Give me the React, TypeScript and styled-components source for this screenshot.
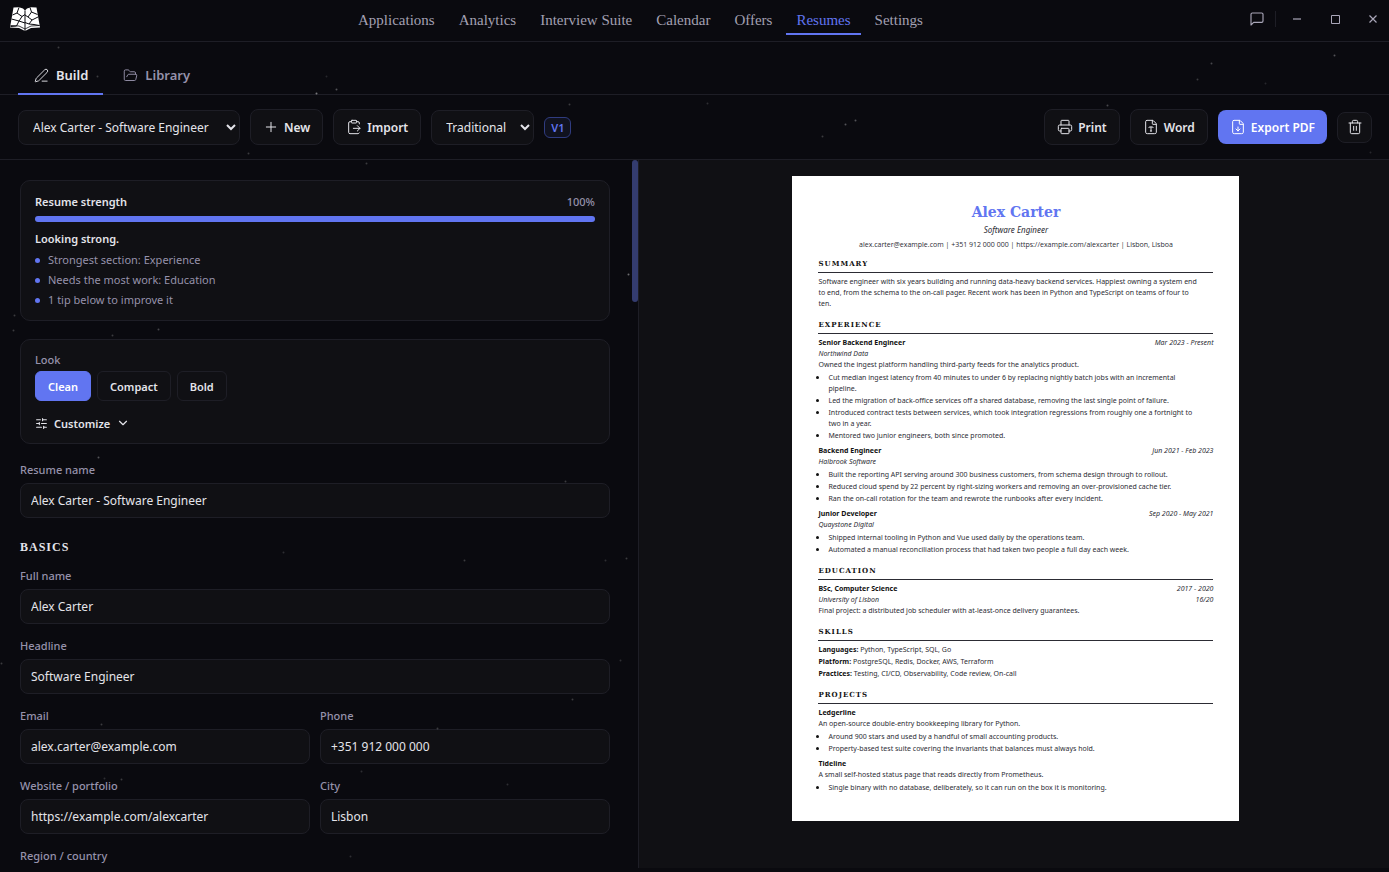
import React, { useState } from "react";
import styled, { createGlobalStyle, css } from "styled-components";
import {
  ChevronDown,
  ClipboardPaste,
  FileDown,
  FileType,
  FolderOpen,
  PenLine,
  Plus,
  Printer,
  SlidersHorizontal,
  Trash2,
} from "lucide-react";

const color = {
  bg: "#0a0a0f",
  surface: "#101014",
  line: "#1e1e26",
  accent: "#6175f1",
  text: "#e4e4ea",
  muted: "#9692ab",
};

const sans = `"Noto Sans", "Open Sans", sans-serif`;
const serif = `"Liberation Serif", "Times New Roman", serif`;
const paperSerif = `"DejaVu Serif", "Liberation Serif", serif`;

const GlobalStyle = createGlobalStyle`
  *, *::before, *::after { box-sizing: border-box; }
  body { margin: 0; background: ${color.bg}; color: ${color.text}; font-family: ${sans}; font-size: 12px; }
  button, input, select { font-family: inherit; font-size: inherit; color: inherit; margin: 0; }
  h1, h2, h3, p, ul { margin: 0; padding: 0; }
  ul { list-style: none; }
  a { color: inherit; text-decoration: none; }
`;

const Shell = styled.div`
  position: relative;
  display: flex;
  flex-direction: column;
  height: 100vh;
  padding-bottom: 4px;
  overflow: hidden;
`;

const Starfield = styled.svg`
  position: absolute;
  inset: 0;
  width: 100%;
  height: 100%;
  pointer-events: none;
`;

const TitleBar = styled.header`
  display: flex;
  justify-content: space-between;
  align-items: center;
  height: 42px;
  flex: none;
  padding: 0 0 3px 10px;
  border-bottom: 1px solid ${color.line};
`;

const MainNav = styled.nav`
  display: flex;
  gap: 4px;
`;

const NavLink = styled.a<{ $active?: boolean }>`
  padding: 6px 10px 2px;
  border-bottom: 2px solid ${(p) => (p.$active ? color.accent : "transparent")};
  color: ${(p) => (p.$active ? color.accent : "#a3a0b2")};
  font: 500 15px/22px ${serif};
`;

const WindowControls = styled.div`
  display: flex;
  align-items: center;
  color: #a9a6b8;
`;

const ControlButton = styled.button<{ $width: number }>`
  display: grid;
  place-items: center;
  width: ${(p) => p.$width}px;
  height: 24px;
  padding: 0;
  border: 0;
  background: none;
`;

const ControlDivider = styled.span`
  width: 1px;
  height: 16px;
  margin: 0 4px 0 2px;
  background: ${color.line};
`;

const TabBar = styled.div`
  display: flex;
  align-items: flex-end;
  gap: 4px;
  height: 53px;
  flex: none;
  padding: 0 18px;
  border-bottom: 1px solid ${color.line};
`;

const Tab = styled.button<{ $active?: boolean }>`
  display: flex;
  align-items: center;
  gap: 7px;
  height: 38px;
  padding: 0 15px 0 16px;
  margin-bottom: -1px;
  border: 0;
  border-bottom: 2px solid ${(p) => (p.$active ? color.accent : "transparent")};
  background: none;
  color: ${(p) => (p.$active ? color.text : color.muted)};
  font-size: 13px;
  font-weight: 600;
`;

const Toolbar = styled.div`
  display: flex;
  align-items: center;
  gap: 10px;
  height: 65px;
  flex: none;
  padding: 0 17px 0 18px;
  border-bottom: 1px solid ${color.line};
`;

const Spacer = styled.span`
  flex: 1;
`;

const framed = css`
  border: 1px solid ${color.line};
  border-radius: 8px;
  background: ${color.surface};
`;

const Select = styled.select<{ $width: number }>`
  ${framed}
  width: ${(p) => p.$width}px;
  height: 35px;
  padding: 0 0 0 10px;
`;

const Button = styled.button<{ $primary?: boolean }>`
  display: flex;
  align-items: center;
  gap: 5px;
  height: 36px;
  padding: 0 12px;
  font-weight: 600;
  white-space: nowrap;
  ${framed}
  ${(p) =>
    p.$primary &&
    css`
      height: 34px;
      border: 0;
      background: ${color.accent};
      color: #fff;
    `}
`;

const IconButton = styled.button`
  ${framed}
  display: grid;
  place-items: center;
  width: 35px;
  height: 31px;
  padding: 0;
`;

const VersionBadge = styled.span`
  padding: 0 6px;
  border: 1px solid #303c80;
  border-radius: 6px;
  background: #10121f;
  color: ${color.accent};
  font-size: 11px;
  font-weight: 600;
  line-height: 19px;
`;

const Workspace = styled.main`
  display: grid;
  grid-template-columns: 46% 1fr;
  flex: 1;
  min-height: 0;
`;

const EditorPane = styled.section`
  display: flex;
  min-height: 0;
  border-right: 1px solid ${color.line};
`;

const EditorScroll = styled.div`
  display: flex;
  flex-direction: column;
  gap: 18px;
  flex: 1;
  padding: 20px 22px 20px 20px;
  overflow-y: auto;
  scrollbar-width: none;
`;

const ScrollRail = styled.div`
  width: 6px;
`;

const ScrollThumb = styled.div`
  height: 20%;
  border-radius: 3px;
  background: #343c6f;
`;

const Card = styled.section`
  flex: none;
  padding: 11px 14px 10px;
  border: 1px solid ${color.line};
  border-radius: 10px;
  background: ${color.surface};
  font-size: 11px;
`;

const StrengthHead = styled.div`
  display: flex;
  justify-content: space-between;
  align-items: center;
  line-height: 20px;
`;

const CardTitle = styled.h2`
  font-size: 11px;
  font-weight: 600;
  line-height: 20px;
`;

const Percent = styled.span`
  color: ${color.muted};
  font-weight: 500;
`;

const Meter = styled.div`
  height: 6px;
  margin: 4px 0 7px;
  border-radius: 3px;
  background: ${color.line};
`;

const MeterFill = styled.div`
  height: 100%;
  border-radius: 3px;
  background: ${color.accent};
`;

const Tip = styled.li`
  display: flex;
  align-items: center;
  gap: 8px;
  color: ${color.muted};
  line-height: 20px;

  &::before {
    content: "";
    width: 5px;
    height: 5px;
    border-radius: 50%;
    background: ${color.accent};
  }
`;

const TipList = styled.ul`
  margin: 1px 0 0;
`;

const Legend = styled.p`
  color: ${color.muted};
  font-weight: 500;
  line-height: 18px;
`;

const Choices = styled.div`
  display: flex;
  gap: 6px;
  margin-top: 2px;
`;

const Choice = styled.button<{ $active?: boolean }>`
  height: 30px;
  padding: 0 12px;
  border: 1px solid ${(p) => (p.$active ? color.accent : color.line)};
  border-radius: 6px;
  background: ${(p) => (p.$active ? color.accent : "transparent")};
  color: ${(p) => (p.$active ? "#fff" : color.text)};
  font-weight: 600;
`;

const Customize = styled.button`
  display: flex;
  align-items: center;
  gap: 6px;
  height: 20px;
  margin-top: 12px;
  padding: 0;
  border: 0;
  background: none;
  font-weight: 600;
`;

const Basics = styled.section`
  flex: none;
`;

const FieldsTitle = styled.h2`
  margin: 2px 0 12px;
  font: 700 12px/18px ${serif};
  letter-spacing: 1px;
`;

const FieldGrid = styled.div`
  display: grid;
  grid-template-columns: 1fr 1fr;
  gap: 14px 10px;
`;

const FieldBox = styled.div<{ $wide?: boolean }>`
  display: flex;
  flex-direction: column;
  gap: 5px;
  flex: none;
  min-width: 0;
  grid-column: ${(p) => (p.$wide ? "1 / -1" : "auto")};
`;

const FieldLabel = styled.label`
  color: ${color.muted};
  font-size: 11px;
  font-weight: 500;
  line-height: 16px;
`;

const TextInput = styled.input`
  ${framed}
  width: 100%;
  height: 35px;
  padding: 0 10px;
`;

const PreviewPane = styled.section`
  display: flex;
  justify-content: center;
  align-items: flex-start;
  padding: 16px 16px 16px 20px;
  background: ${color.surface};
  overflow: hidden;
`;

const Paper = styled.article`
  width: 100%;
  max-width: 447px;
  min-height: 645px;
  padding: 26px;
  background: #fff;
  color: #2c2c34;
  font-size: 7px;
  line-height: 11px;
`;

const PaperHead = styled.header`
  margin-bottom: 8px;
  text-align: center;
`;

const PaperName = styled.h1`
  color: ${color.accent};
  font: 700 14px/20px ${paperSerif};
`;

const PaperRole = styled.p`
  margin: 2px 0 3px;
  font-size: 8px;
  font-style: italic;
  line-height: 12px;
`;

const PaperContact = styled.p`
  font-family: "Open Sans", "Noto Sans", sans-serif;
`;

const PaperSection = styled.section`
  & + & {
    margin-top: 10px;
  }
`;

const PaperHeading = styled.h2`
  margin-bottom: 3px;
  padding-bottom: 2px;
  border-bottom: 1px solid #2c2c34;
  color: #111;
  font: 700 7px/12px ${paperSerif};
  letter-spacing: 1px;
`;

const PaperText = styled.p`
  padding-right: 12px;
`;

const Entry = styled.div`
  & + & {
    margin-top: 4px;
  }
`;

const EntryRow = styled.div`
  display: flex;
  justify-content: space-between;
`;

const EntryTitle = styled.h3`
  color: #111;
  font-size: 7px;
  font-weight: 700;
`;

const Bullets = styled.ul`
  display: grid;
  gap: 1px;
  margin: 2px 0 0 -2px;
  padding-right: 12px;
`;

const Bullet = styled.li`
  display: flex;
  gap: 9px;

  &::before {
    content: "";
    flex: none;
    width: 3px;
    height: 3px;
    margin-top: 4px;
    border-radius: 50%;
    background: #111;
  }
`;

const SkillList = styled.ul`
  display: grid;
  gap: 1px;

  b {
    color: #111;
  }
`;

const stars: [number, number, number][] = [
  [58, 47, 0.2], [97, 76, 0.2], [316, 93, 0.45], [326, 76, 0.12], [336, 89, 0.3], [248, 153, 0.2],
  [366, 163, 0.2], [569, 104, 0.2], [707, 103, 0.15], [822, 136, 0.2], [845, 124, 0.3], [855, 120, 0.3],
  [1197, 79, 0.2], [1211, 63, 0.25], [1334, 55, 0.3], [1265, 83, 0.12], [1107, 105, 0.25], [1370, 152, 0.12],
  [14, 315, 0.2], [13, 330, 0.2], [112, 335, 0.2], [158, 329, 0.25], [98, 457, 0.3], [628, 274, 0.4],
  [565, 481, 0.2], [283, 552, 0.15], [464, 560, 0.2], [626, 558, 0.2], [605, 560, 0.15], [1, 663, 0.2],
  [620, 660, 0.15], [101, 724, 0.2], [104, 778, 0.15], [121, 779, 0.2], [437, 728, 0.2], [361, 771, 0.15],
  [572, 699, 0.2], [507, 784, 0.15], [350, 856, 0.15],
];

const Logo = () => (
  <svg width="30" height="25" viewBox="0 0 30 25" aria-label="Home">
    <path d="M3.5 0.5 9 0.3 13 1.5 15 3.5 17 1.5 21 0.3 26.5 0.5 30 20.5 21 21 15 24 9 21 0 20.5Z" fill="#fff" />
    <path
      d="M15 3.5V24M9 .5 7 6 2.5 8M7 6l5 3.5 3-2M12 9.500 9 14 1.500 12M9 14l-2.500 5-6 .5M9 14l6 2M20 .5 21.500 5 27.500 7.500M21.500 5 18 10l-3-2M18 10l4 3 6-3M22 13l-3 4-4-1.500M19 17l5 .5 5.500 1"
      fill="none"
      stroke="#0a0a0f"
      strokeWidth="1"
    />
    <path d="M.5 18.500 9 19l6 3 6-3 8.500-.5" fill="none" stroke="#0a0a0f" strokeWidth=".8" />
  </svg>
);

const ChatIcon = () => (
  <svg width="16" height="16" viewBox="0 0 24 24" fill="none" stroke="currentColor" strokeWidth="1.7" strokeLinejoin="round">
    <path d="M21 15a2 2 0 0 1-2 2H7l-4 4V5a2 2 0 0 1 2-2h14a2 2 0 0 1 2 2z" />
  </svg>
);

const MinimizeIcon = () => (
  <svg width="8" height="2" viewBox="0 0 8 2">
    <path d="M0 1h8" stroke="currentColor" strokeWidth="2" opacity=".6" />
  </svg>
);

const MaximizeIcon = () => (
  <svg width="9" height="9" viewBox="0 0 9 9" fill="none" stroke="currentColor">
    <path d="M.5.5h8v8h-8z" />
  </svg>
);

const CloseIcon = () => (
  <svg width="8" height="8" viewBox="0 0 8 8" stroke="currentColor" strokeWidth="1.2">
    <path d="M.5.5l7 7M7.500.5l-7 7" />
  </svg>
);

type FieldProps = { id: string; label: string; value: string; wide?: boolean };

const Field = ({ id, label, value, wide }: FieldProps) => (
  <FieldBox $wide={wide}>
    <FieldLabel htmlFor={id}>{label}</FieldLabel>
    <TextInput id={id} defaultValue={value} />
  </FieldBox>
);

type EntryData = { title: string; date?: string; org?: string; note?: string; text?: string; bullets?: string[] };

const EntryBlock = ({ title, date, org, note, text, bullets }: EntryData) => (
  <Entry>
    <EntryRow>
      <EntryTitle>{title}</EntryTitle>
      {date && <em>{date}</em>}
    </EntryRow>
    {org && (
      <EntryRow>
        <em>{org}</em>
        {note && <em>{note}</em>}
      </EntryRow>
    )}
    {text && <PaperText>{text}</PaperText>}
    {bullets && (
      <Bullets>
        {bullets.map((b) => (
          <Bullet key={b}>{b}</Bullet>
        ))}
      </Bullets>
    )}
  </Entry>
);

const navItems = ["Applications", "Analytics", "Interview Suite", "Calendar", "Offers", "Resumes", "Settings"];

const experience: EntryData[] = [
  {
    title: "Senior Backend Engineer",
    date: "Mar 2023 - Present",
    org: "Northwind Data",
    text: "Owned the ingest platform handling third-party feeds for the analytics product.",
    bullets: [
      "Cut median ingest latency from 40 minutes to under 6 by replacing nightly batch jobs with an incremental pipeline.",
      "Led the migration of back-office services off a shared database, removing the last single point of failure.",
      "Introduced contract tests between services, which took integration regressions from roughly one a fortnight to two in a year.",
      "Mentored two junior engineers, both since promoted.",
    ],
  },
  {
    title: "Backend Engineer",
    date: "Jun 2021 - Feb 2023",
    org: "Halbrook Software",
    bullets: [
      "Built the reporting API serving around 300 business customers, from schema design through to rollout.",
      "Reduced cloud spend by 22 percent by right-sizing workers and removing an over-provisioned cache tier.",
      "Ran the on-call rotation for the team and rewrote the runbooks after every incident.",
    ],
  },
  {
    title: "Junior Developer",
    date: "Sep 2020 - May 2021",
    org: "Quaystone Digital",
    bullets: [
      "Shipped internal tooling in Python and Vue used daily by the operations team.",
      "Automated a manual reconciliation process that had taken two people a full day each week.",
    ],
  },
];

const projects: EntryData[] = [
  {
    title: "Ledgerline",
    text: "An open-source double-entry bookkeeping library for Python.",
    bullets: [
      "Around 900 stars and used by a handful of small accounting products.",
      "Property-based test suite covering the invariants that balances must always hold.",
    ],
  },
  {
    title: "Tideline",
    text: "A small self-hosted status page that reads directly from Prometheus.",
    bullets: ["Single binary with no database, deliberately, so it can run on the box it is monitoring."],
  },
];

const skills = [
  ["Languages:", "Python, TypeScript, SQL, Go"],
  ["Platform:", "PostgreSQL, Redis, Docker, AWS, Terraform"],
  ["Practices:", "Testing, CI/CD, Observability, Code review, On-call"],
];

export default function App() {
  const [look, setLook] = useState("Clean");
  const strength = 100;

  return (
    <Shell>
      <GlobalStyle />
      <Starfield aria-hidden="true">
        {stars.map(([x, y, o]) => (
          <circle key={`${x}-${y}`} cx={x + 0.5} cy={y + 0.5} r="1" fill="#fff" opacity={o} />
        ))}
      </Starfield>

      <TitleBar>
        <Logo />
        <MainNav>
          {navItems.map((item) => (
            <NavLink key={item} href="#" $active={item === "Resumes"}>
              {item}
            </NavLink>
          ))}
        </MainNav>
        <WindowControls>
          <ControlButton $width={32} aria-label="Feedback">
            <ChatIcon />
          </ControlButton>
          <ControlDivider />
          <ControlButton $width={34} aria-label="Minimize">
            <MinimizeIcon />
          </ControlButton>
          <ControlButton $width={43} aria-label="Maximize">
            <MaximizeIcon />
          </ControlButton>
          <ControlButton $width={32} aria-label="Close">
            <CloseIcon />
          </ControlButton>
        </WindowControls>
      </TitleBar>

      <TabBar role="tablist">
        <Tab role="tab" aria-selected="true" $active>
          <PenLine size={15} strokeWidth={1.5} />
          Build
        </Tab>
        <Tab role="tab" aria-selected="false">
          <FolderOpen size={15} strokeWidth={1.5} />
          Library
        </Tab>
      </TabBar>

      <Toolbar>
        <Select $width={222} aria-label="Resume">
          <option>Alex Carter - Software Engineer</option>
        </Select>
        <Button>
          <Plus size={16} strokeWidth={1.5} />
          New
        </Button>
        <Button>
          <ClipboardPaste size={16} strokeWidth={1.5} />
          Import
        </Button>
        <Select $width={103} aria-label="Template">
          <option>Traditional</option>
        </Select>
        <VersionBadge>V1</VersionBadge>
        <Spacer />
        <Button>
          <Printer size={16} strokeWidth={1.5} />
          Print
        </Button>
        <Button>
          <FileType size={16} strokeWidth={1.5} />
          Word
        </Button>
        <Button $primary>
          <FileDown size={16} strokeWidth={1.5} />
          Export PDF
        </Button>
        <IconButton aria-label="Delete resume">
          <Trash2 size={16} strokeWidth={1.5} />
        </IconButton>
      </Toolbar>

      <Workspace>
        <EditorPane>
          <EditorScroll>
            <Card>
              <StrengthHead>
                <CardTitle>Resume strength</CardTitle>
                <Percent>{strength}%</Percent>
              </StrengthHead>
              <Meter>
                <MeterFill style={{ width: `${strength}%` }} />
              </Meter>
              <CardTitle as="h3">Looking strong.</CardTitle>
              <TipList>
                <Tip>Strongest section: Experience</Tip>
                <Tip>Needs the most work: Education</Tip>
                <Tip>1 tip below to improve it</Tip>
              </TipList>
            </Card>

            <Card>
              <Legend>Look</Legend>
              <Choices>
                {["Clean", "Compact", "Bold"].map((name) => (
                  <Choice key={name} $active={look === name} onClick={() => setLook(name)}>
                    {name}
                  </Choice>
                ))}
              </Choices>
              <Customize>
                <SlidersHorizontal size={13} strokeWidth={2} />
                Customize
                <ChevronDown size={14} strokeWidth={2} />
              </Customize>
            </Card>

            <Field id="resume-name" label="Resume name" value="Alex Carter - Software Engineer" />

            <Basics>
              <FieldsTitle>BASICS</FieldsTitle>
              <FieldGrid>
                <Field id="full-name" label="Full name" value="Alex Carter" wide />
                <Field id="headline" label="Headline" value="Software Engineer" wide />
                <Field id="email" label="Email" value="alex.carter@example.com" />
                <Field id="phone" label="Phone" value="+351 912 000 000" />
                <Field id="website" label="Website / portfolio" value="https://example.com/alexcarter" />
                <Field id="city" label="City" value="Lisbon" />
                <Field id="region" label="Region / country" value="Lisboa" wide />
              </FieldGrid>
            </Basics>
          </EditorScroll>
          <ScrollRail>
            <ScrollThumb />
          </ScrollRail>
        </EditorPane>

        <PreviewPane>
          <Paper>
            <PaperHead>
              <PaperName>Alex Carter</PaperName>
              <PaperRole>Software Engineer</PaperRole>
              <PaperContact>
                alex.carter@example.com | +351 912 000 000 | https://example.com/alexcarter | Lisbon, Lisboa
              </PaperContact>
            </PaperHead>
            <PaperSection>
              <PaperHeading>SUMMARY</PaperHeading>
              <PaperText>
                Software engineer with six years building and running data-heavy backend services. Happiest owning a
                system end to end, from the schema to the on-call pager. Recent work has been in Python and TypeScript
                on teams of four to ten.
              </PaperText>
            </PaperSection>
            <PaperSection>
              <PaperHeading>EXPERIENCE</PaperHeading>
              {experience.map((e) => (
                <EntryBlock key={e.title} {...e} />
              ))}
            </PaperSection>
            <PaperSection>
              <PaperHeading>EDUCATION</PaperHeading>
              <EntryBlock
                title="BSc, Computer Science"
                date="2017 - 2020"
                org="University of Lisbon"
                note="16/20"
                text="Final project: a distributed job scheduler with at-least-once delivery guarantees."
              />
            </PaperSection>
            <PaperSection>
              <PaperHeading>SKILLS</PaperHeading>
              <SkillList>
                {skills.map(([group, list]) => (
                  <li key={group}>
                    <b>{group}</b> {list}
                  </li>
                ))}
              </SkillList>
            </PaperSection>
            <PaperSection>
              <PaperHeading>PROJECTS</PaperHeading>
              {projects.map((p) => (
                <EntryBlock key={p.title} {...p} />
              ))}
            </PaperSection>
          </Paper>
        </PreviewPane>
      </Workspace>
    </Shell>
  );
}
